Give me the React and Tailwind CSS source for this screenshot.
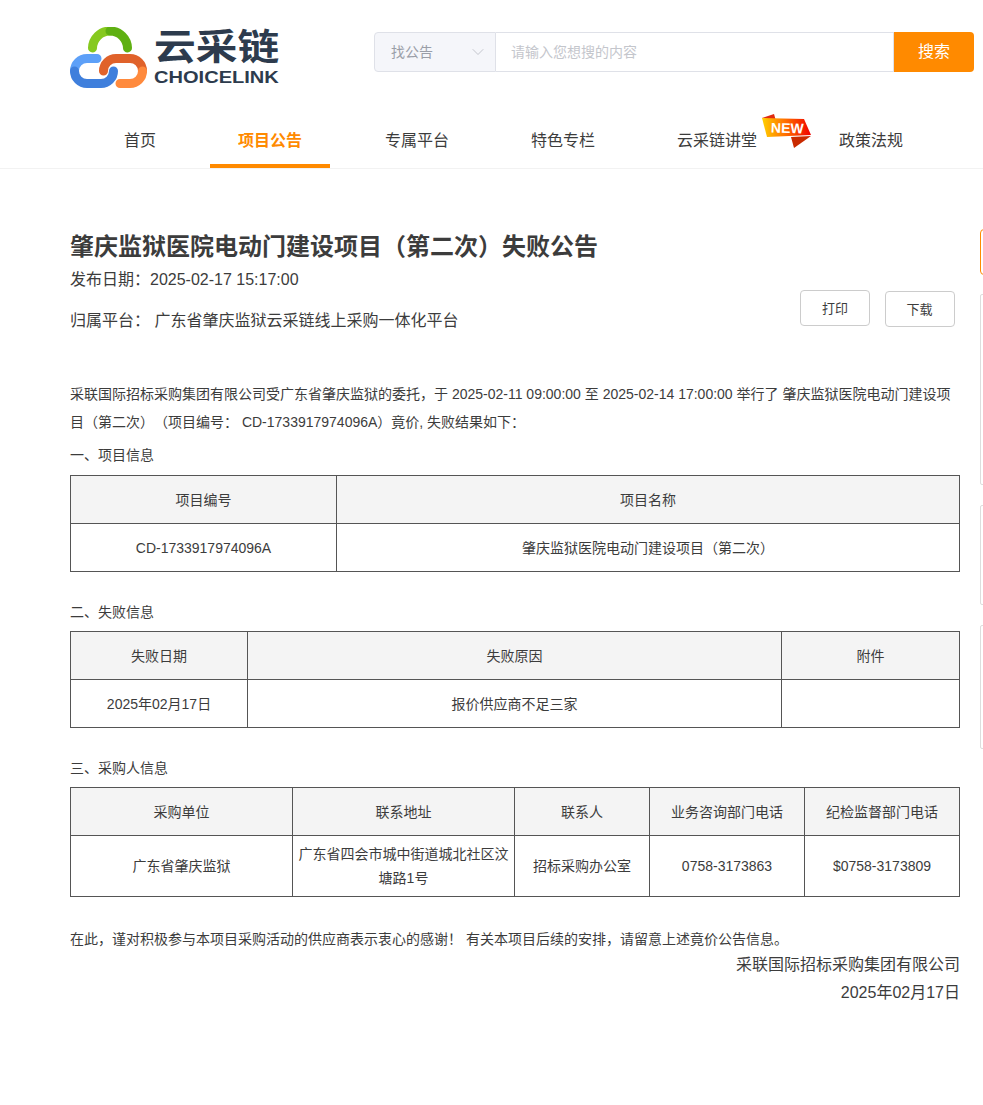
import React from "react";
import { ChevronDown } from "lucide-react";

const navItems = ["首页", "项目公告", "专属平台", "特色专栏", "云采链讲堂", "政策法规"];

function LogoIcon() {
  return (
    <svg width="77" height="61" viewBox="70 27 77 61" fill="none" strokeWidth="9" strokeLinecap="round">
      {/* green cloud arc */}
      <path d="M92.5 48 A17.500 17.500 0 0 1 110 31" stroke="#86c91f" />
      <path d="M110 31 A17.500 17.500 0 0 1 127.500 48" stroke="#5fb012" />
      {/* blue link */}
      <path d="M97 58.500 H87 A12.500 12.500 0 0 0 74.500 71" stroke="#5da0f8" />
      <path d="M74.500 71 A12.500 12.500 0 0 0 87 83.500 H101 A12.500 12.500 0 0 0 113.500 71" stroke="#3f7fdc" />
      {/* orange link */}
      <path d="M103.500 71 A12.500 12.500 0 0 1 116 58.500 H130 A12.500 12.500 0 0 1 142.500 71" stroke="#e0622a" />
      <path d="M142.500 71 A12.500 12.500 0 0 1 130 83.500 H120" stroke="#ff8a3d" />
    </svg>
  );
}

function NewBadge() {
  return (
    <div className="absolute left-[113px] top-0 w-[50px] h-[36px]">
      <svg width="50" height="36" viewBox="0 0 50 36">
        <defs>
          <linearGradient id="badgeFill" x1="0" y1="0" x2="1" y2="0">
            <stop offset="0" stopColor="#ffd000" />
            <stop offset="0.5" stopColor="#ff6a00" />
            <stop offset="1" stopColor="#f00000" />
          </linearGradient>
        </defs>
        <polygon points="0,5 12,1 14,8" fill="#e02b10" />
        <polygon points="29,24 49,23 32,35" fill="#c92a00" />
        <polygon points="0,5 42,6 49,22 5,24" fill="url(#badgeFill)" />
      </svg>
      <span className="absolute left-[9px] top-[6px] text-[14px] leading-[18px] font-bold text-white rotate-[2deg]">
        NEW
      </span>
    </div>
  );
}

function Header() {
  return (
    <header className="h-[169px] border-b border-[#f2f2f2]">
      <div className="flex items-start pl-[70px] pt-[27px] h-[113px]">
        <div className="flex w-[304px]">
          <LogoIcon />
          <div className="ml-[7px] mt-[3px] w-[130px] text-[#2d3b4d]">
            <div className="text-[36px] leading-[36px] font-bold whitespace-nowrap origin-left scale-x-[1.16]">云采链</div>
            <div className="text-[17px] leading-[20px] font-bold mt-[2px] whitespace-nowrap origin-left scale-x-[1.18]">CHOICELINK</div>
          </div>
        </div>
        <div className="flex mt-[5px] w-[600px] h-[40px] text-sm">
          <div className="w-[122px] flex items-center justify-between pl-[16px] pr-[7px] bg-[#f5f6fa] border border-[#dfe1e8] rounded-l-[4px] text-[#9a9ea8]">
            <span>找公告</span>
            <ChevronDown size={20} strokeWidth={1} className="text-[#b9bcc4]" />
          </div>
          <div className="flex-1 flex items-center pl-[15px] border-y border-r border-[#dfe1e8] text-[#c4c6cc]">
            请输入您想搜的内容
          </div>
          <div className="w-[80px] flex items-center justify-center bg-[#ff8a00] rounded-r-[4px] text-white text-base">
            搜索
          </div>
        </div>
      </div>
      <nav className="flex gap-[26px] pl-[96px] h-[55px]">
        {navItems.map((item) => (
          <div
            key={item}
            className={
              item === "项目公告"
                ? "relative px-[28px] mr-[1px] h-[55px] pt-[16px] text-base leading-[24px] font-bold text-[#ff8a00] border-b-4 border-[#ff8a00]"
                : "relative px-[28px] h-[55px] pt-[16px] text-base leading-[24px] text-[#3c3c3c]"
            }
          >
            {item}
            {item === "云采链讲堂" && <NewBadge />}
          </div>
        ))}
      </nav>
    </header>
  );
}

function InfoTable({ widths, head, row, rowHeight }) {
  return (
    <table className="w-[889px] table-fixed border-collapse text-sm text-[#3c3c3c]">
      <colgroup>
        {widths.map((w, i) => (
          <col key={i} style={{ width: w }} />
        ))}
      </colgroup>
      <thead>
        <tr className="h-[48px] bg-[#f4f4f4]">
          {head.map((h) => (
            <th key={h} className="border border-[#555] font-normal leading-[24px]">{h}</th>
          ))}
        </tr>
      </thead>
      <tbody>
        <tr style={{ height: rowHeight }}>
          {row.map((c, i) => (
            <td key={i} className="border border-[#555] text-center leading-[24px] px-[5px]">{c}</td>
          ))}
        </tr>
      </tbody>
    </table>
  );
}

function SideRail() {
  return (
    <div>
      <div className="absolute left-[980px] top-[229px] w-[20px] h-[46px] border border-[#ff8a00] rounded-[4px]" />
      <div className="absolute left-[980px] top-[294px] w-[20px] h-[191px] border border-[#ddd] rounded-[2px]" />
      <div className="absolute left-[980px] top-[505px] w-[20px] h-[100px] border border-[#ddd] rounded-[2px]" />
      <div className="absolute left-[980px] top-[625px] w-[20px] h-[124px] border border-[#ddd] rounded-[2px]" />
    </div>
  );
}

export default function App() {
  return (
    <div className="relative w-full h-[1105px] overflow-hidden bg-white font-['Liberation_Sans','Noto_Sans_CJK_SC',sans-serif] text-[#3c3c3c] [text-spacing-trim:space-all]">
      <Header />
      <SideRail />
      <main className="px-[70px] w-[960px] box-content">
        <h1 className="mt-[61px] text-2xl leading-[34px] font-bold">肇庆监狱医院电动门建设项目（第二次）失败公告</h1>
        <div className="flex justify-between w-[885px]">
          <div className="text-base">
            <p className="mt-[4px] leading-[24px]">发布日期：2025-02-17 15:17:00</p>
            <p className="mt-[17px] leading-[24px]">归属平台： 广东省肇庆监狱云采链线上采购一体化平台</p>
          </div>
          <div className="flex gap-[15px] items-start pt-[26px] text-[13px]">
            <button className="w-[70px] h-[36px] pt-[2px] border border-[#ccc] rounded-[4px]">打印</button>
            <button className="w-[70px] h-[36px] pt-[2px] pr-[1px] mt-[1px] border border-[#ccc] rounded-[4px]">下载</button>
          </div>
        </div>

        <p className="mt-[47px] w-[890px] text-sm leading-[28px]">
          采联国际招标采购集团有限公司受广东省肇庆监狱的委托，于 2025-02-11 09:00:00 至 2025-02-14 17:00:00 举行了 肇庆监狱医院电动门建设项目（第二次）（项目编号： CD-1733917974096A）竟价, 失败结果如下：
        </p>
        <p className="mt-[5px] mb-[6px] text-sm leading-[28px]">一、项目信息</p>
        <InfoTable
          widths={[266, 623]}
          head={["项目编号", "项目名称"]}
          row={["CD-1733917974096A", "肇庆监狱医院电动门建设项目（第二次）"]}
          rowHeight={48}
        />
        <p className="mt-[26px] mb-[5px] text-sm leading-[28px]">二、失败信息</p>
        <InfoTable
          widths={[177, 534, 178]}
          head={["失败日期", "失败原因", "附件"]}
          row={["2025年02月17日", "报价供应商不足三家", ""]}
          rowHeight={48}
        />
        <p className="mt-[26px] mb-[5px] text-sm leading-[28px]">三、采购人信息</p>
        <InfoTable
          widths={[222, 222, 135, 155, 155]}
          head={["采购单位", "联系地址", "联系人", "业务咨询部门电话", "纪检监督部门电话"]}
          row={["广东省肇庆监狱", "广东省四会市城中街道城北社区汶塘路1号", "招标采购办公室", "0758-3173863", "$0758-3173809"]}
          rowHeight={61}
        />
        <p className="mt-[28px] text-sm leading-[28px]">
          在此，谨对积极参与本项目采购活动的供应商表示衷心的感谢！ 有关本项目后续的安排，请留意上述竟价公告信息。
        </p>
        <p className="mt-[-2px] w-[890px] text-right text-base leading-[28px]">采联国际招标采购集团有限公司</p>
        <p className="w-[890px] text-right text-base leading-[28px]">2025年02月17日</p>
      </main>
    </div>
  );
}
